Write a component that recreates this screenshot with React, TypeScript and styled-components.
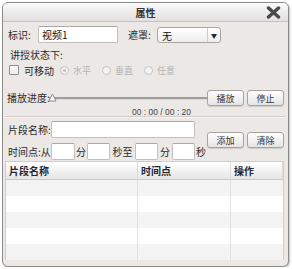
import styled, { createGlobalStyle } from "styled-components";

const GlobalStyle = createGlobalStyle`
  html, body {
    margin: 0;
    padding: 0;
    background: #ffffff;
  }
  body {
    font-family: "Noto Sans CJK SC", "Liberation Sans", sans-serif;
    font-size: 10px;
    color: #222;
  }
`;

const Dialog = styled.div`
  margin: 2px 0 0 2px;
  width: 287px;
  height: 265px;
  box-sizing: border-box;
  border: 1px solid #8e8c8b;
  border-radius: 6px;
  background: #ebe8e6;
  display: flex;
  flex-direction: column;
  overflow: hidden;
  box-shadow: 1px 1px 2px rgba(0, 0, 0, 0.25);
`;

const TitleBar = styled.div`
  position: relative;
  height: 18px;
  flex: none;
  display: flex;
  align-items: center;
  justify-content: center;
  background: linear-gradient(#fbfbfb, #e2e0df);
  border-bottom: 1px solid #c4c1bf;
  font-size: 10px;
  font-weight: 700;
  color: #333;
`;

const CloseButton = styled.div`
  position: absolute;
  right: 7px;
  top: 3px;
  width: 15px;
  height: 13px;
  display: flex;
`;

const Content = styled.div`
  flex: 1;
  display: flex;
  flex-direction: column;
  padding: 0 0 0 5px;
`;

const Row = styled.div<{ $top?: number; $h?: number }>`
  display: flex;
  align-items: center;
  margin-top: ${(p) => p.$top ?? 0}px;
  height: ${(p) => p.$h ?? 17}px;
  flex: none;
`;

const Label = styled.span<{ $w?: number; $pad?: number }>`
  box-sizing: border-box;
  width: ${(p) => (p.$w ? `${p.$w}px` : "auto")};
  padding-left: ${(p) => p.$pad ?? 0}px;
  flex: none;
  white-space: nowrap;
  color: #2a2a2a;
`;

const Unit = styled.span<{ $w: number }>`
  width: ${(p) => p.$w}px;
  flex: none;
  text-align: center;
  color: #2a2a2a;
`;

const TextInput = styled.div<{ $w: number }>`
  width: ${(p) => p.$w}px;
  height: 17px;
  box-sizing: border-box;
  flex: none;
  background: #fff;
  border: 1px solid #c2bfbd;
  border-top-color: #aaa7a5;
  border-radius: 2px;
  display: flex;
  align-items: center;
  padding-left: 3px;
  color: #111;
`;

const Select = styled.div`
  width: 64px;
  height: 16px;
  box-sizing: border-box;
  margin-top: 1px;
  flex: none;
  display: flex;
  background: linear-gradient(#ffffff, #eeeeee);
  border: 1px solid #a9a6a4;
  border-radius: 3px;
`;

const SelectValue = styled.span`
  flex: 1;
  padding-left: 4px;
  display: flex;
  align-items: center;
  color: #111;
`;

const SelectArrow = styled.span`
  width: 12px;
  border-left: 1px solid #cfcccb;
  display: flex;
  align-items: center;
  justify-content: center;
  font-size: 6px;
  color: #222;
`;

const CheckBox = styled.span`
  width: 10px;
  height: 10px;
  box-sizing: border-box;
  margin: 0 5px 0 1px;
  flex: none;
  background: linear-gradient(#fafafa, #ececec);
  border: 1px solid #8f8d8c;
  border-radius: 1px;
`;

const RadioGroup = styled.span`
  display: flex;
  align-items: center;
  margin-left: 6px;
`;

const RadioItem = styled.span`
  display: flex;
  align-items: center;
  width: 42px;
  color: #b5b3b2;
  font-size: 9px;
`;

const RadioCircle = styled.span<{ $checked?: boolean }>`
  width: 9px;
  height: 9px;
  box-sizing: border-box;
  border-radius: 50%;
  border: 1px solid #c4c2c1;
  background: #f4f3f2;
  margin-right: 4px;
  display: flex;
  align-items: center;
  justify-content: center;
  &::after {
    content: "";
    display: ${(p) => (p.$checked ? "block" : "none")};
    width: 3px;
    height: 3px;
    border-radius: 50%;
    background: #c0bebd;
  }
`;

const SplitRow = styled.div<{ $top: number; $h: number }>`
  display: flex;
  align-items: center;
  margin-top: ${(p) => p.$top}px;
  height: ${(p) => p.$h}px;
  flex: none;
`;

const LeftBlock = styled.div`
  width: 199px;
  display: flex;
  flex-direction: column;
  align-self: stretch;
`;

const PlayLine = styled.div`
  display: flex;
  align-items: center;
  height: 15px;
  margin-left: -1px;
`;

const SliderTrack = styled.div`
  position: relative;
  flex: 1;
  height: 2px;
  margin-top: 2px;
  background: #9f9d9c;
  border-bottom: 1px solid #dcdad9;
`;

const SliderThumb = styled.svg`
  position: absolute;
  left: -1px;
  top: -4px;
`;

const TimeText = styled.div`
  height: 9px;
  line-height: 9px;
  padding-left: 124px;
  font-family: "Liberation Sans", sans-serif;
  font-size: 8.5px;
  color: #444;
  margin-top: 3px;
  white-space: pre;
`;

const ButtonGroup = styled.div<{ $top?: number }>`
  display: flex;
  gap: 3px;
  align-self: flex-start;
  margin-top: ${(p) => p.$top ?? 0}px;
`;

const Button = styled.div`
  width: 37px;
  height: 16px;
  box-sizing: border-box;
  display: flex;
  align-items: center;
  justify-content: center;
  background: linear-gradient(#ffffff, #e6e4e3);
  border: 1px solid #a6a3a1;
  border-radius: 3px;
  box-shadow: 0 1px 1px rgba(0, 0, 0, 0.12);
  font-size: 9px;
  color: #333;
`;

const Separator = styled.div`
  height: 0;
  margin: 0 3px 0 -3px;
  border-top: 1px solid #cfccca;
  border-bottom: 1px solid #f7f6f5;
  flex: none;
`;

const Table = styled.div`
  margin: 1px 0 0 -3px;
  width: 279px;
  height: 99px;
  box-sizing: border-box;
  border: 1px solid #d0cecd;
  background: #fff;
  display: grid;
  grid-template-columns: 132px 93px 1fr;
  grid-template-rows: 18px repeat(5, 16px);
  flex: none;
`;

const HeadCell = styled.div`
  display: flex;
  align-items: center;
  padding-left: 3px;
  background: linear-gradient(#ffffff, #e6e6e6);
  border-bottom: 1px solid #c9c9c9;
  border-right: 1px solid #dcdcdc;
  font-weight: 700;
  font-size: 10px;
  color: #1c2836;
  &:last-child {
    border-right: none;
  }
`;

const Cell = styled.div<{ $odd: boolean; $last: boolean }>`
  background: ${(p) => (p.$odd ? "#f3f3f3" : "#ffffff")};
  border-right: ${(p) => (p.$last ? "none" : "1px solid #e0e0e0")};
`;

const columns = ["片段名称", "时间点", "操作"];
const rows = [0, 1, 2, 3, 4];

export default function App() {
  return (
    <>
      <GlobalStyle />
      <Dialog>
        <TitleBar>
          属性
          <CloseButton>
            <svg width="15" height="13" viewBox="0 0 15 13">
              <path
                d="M2.5 2 L12.5 11 M12.5 2 L2.5 11"
                stroke="#4b4b4b"
                strokeWidth="3.4"
                strokeLinecap="round"
              />
            </svg>
          </CloseButton>
        </TitleBar>
        <Content>
          <Row $top={4}>
            <Label $w={30}>标识:</Label>
            <TextInput $w={80}>视频1</TextInput>
            <Label $w={39} $pad={10}>
              遮罩:
            </Label>
            <Select>
              <SelectValue>无</SelectValue>
              <SelectArrow>▼</SelectArrow>
            </Select>
          </Row>
          <Row $top={4} $h={14}>
            <Label $pad={2}>讲授状态下:</Label>
          </Row>
          <Row $top={2} $h={14}>
            <CheckBox />
            <Label>可移动</Label>
            <RadioGroup>
              <RadioItem>
                <RadioCircle $checked />
                水平
              </RadioItem>
              <RadioItem>
                <RadioCircle />
                垂直
              </RadioItem>
              <RadioItem>
                <RadioCircle />
                任意
              </RadioItem>
            </RadioGroup>
          </Row>
          <SplitRow $top={13} $h={26}>
            <LeftBlock>
              <PlayLine>
                <Label $w={42}>播放进度:</Label>
                <SliderTrack>
                  <SliderThumb width="9" height="9" viewBox="0 0 9 9">
                    <path
                      d="M4.5 1 L8 8 L1 8 Z"
                      fill="#fdfdfd"
                      stroke="#8d8b8a"
                      strokeWidth="1"
                      strokeLinejoin="round"
                    />
                  </SliderThumb>
                </SliderTrack>
              </PlayLine>
              <TimeText>00 : 00 / 00 : 20</TimeText>
            </LeftBlock>
            <ButtonGroup>
              <Button>播放</Button>
              <Button>停止</Button>
            </ButtonGroup>
          </SplitRow>
          <Separator />
          <SplitRow $top={3} $h={39}>
            <LeftBlock>
              <Row>
                <Label $w={43}>片段名称:</Label>
                <TextInput $w={144} />
              </Row>
              <Row $top={5}>
                <Label $w={43}>时间点:从</Label>
                <TextInput $w={24} />
                <Unit $w={12}>分</Unit>
                <TextInput $w={23} />
                <Unit $w={25}>秒至</Unit>
                <TextInput $w={23} />
                <Unit $w={14}>分</Unit>
                <TextInput $w={23} />
                <Unit $w={12}>秒</Unit>
              </Row>
            </LeftBlock>
            <ButtonGroup $top={11}>
              <Button>添加</Button>
              <Button>清除</Button>
            </ButtonGroup>
          </SplitRow>
          <Table>
            {columns.map((c) => (
              <HeadCell key={c}>{c}</HeadCell>
            ))}
            {rows.map((r) =>
              columns.map((c, i) => (
                <Cell key={`${r}-${c}`} $odd={r % 2 === 0} $last={i === columns.length - 1} />
              ))
            )}
          </Table>
        </Content>
      </Dialog>
    </>
  );
}
